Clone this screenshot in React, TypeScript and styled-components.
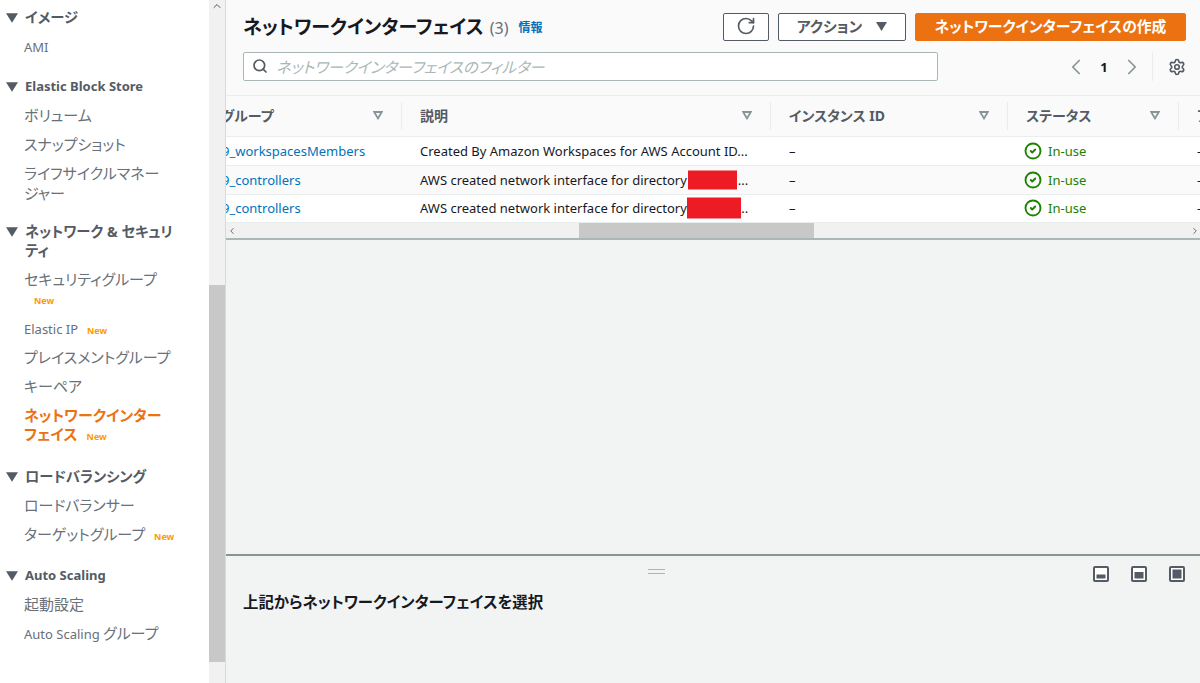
import styled, { createGlobalStyle } from "styled-components";
import { RotateCw, ChevronLeft, ChevronRight, ChevronUp, Settings, Search, CircleCheck } from "lucide-react";

const GlobalStyle = createGlobalStyle`
  html, body {
    margin: 0;
    padding: 0;
    height: 100%;
    overflow: hidden;
  }
  body {
    font-family: "Noto Sans", "Noto Sans CJK JP", sans-serif;
    font-feature-settings: "palt";
    font-size: 14px;
    color: #16191f;
  }
  * {
    box-sizing: border-box;
  }
`;

const Page = styled.div`
  display: flex;
  width: 1200px;
  height: 683px;
  overflow: hidden;
`;

const Sidebar = styled.nav`
  width: 209px;
  flex: none;
  background: #fff;
  padding-top: 8px;
`;

const Section = styled.div<{ $after: number }>`
  margin-bottom: ${(p) => p.$after}px;
`;

const Latin = styled.span`
  font-size: 13px;
  line-height: 1;
`;

const SectionTitle = styled.div`
  display: flex;
  align-items: flex-start;
  gap: 7px;
  padding: 0 30px 0 6px;
  font-size: 14.3px;
  font-weight: 700;
  line-height: 19.5px;
  color: #545b64;
  margin-bottom: 9.5px;

  ${Latin} {
    line-height: 19.5px;
  }
`;

const TitleCaret = styled.span`
  flex: none;
  display: flex;
  margin-top: 5px;
`;

const NavItem = styled.div<{ $active?: boolean }>`
  padding: 0 20px 0 24px;
  font-size: 15px;
  line-height: 19.5px;
  margin-bottom: 9.5px;
  color: ${(p) => (p.$active ? "#ec7211" : "#687078")};
  font-weight: ${(p) => (p.$active ? 700 : 400)};
`;

const NewTag = styled.span<{ $block?: boolean }>`
  display: ${(p) => (p.$block ? "block" : "inline")};
  margin: ${(p) => (p.$block ? "1px 0 -1px 10px" : "0 0 0 9px")};
  font-size: 9px;
  font-weight: 700;
  line-height: ${(p) => (p.$block ? "19.5px" : "1")};
  color: #ff9900;
`;

const SideTrack = styled.div`
  position: relative;
  width: 16px;
  flex: none;
  background: #f1f1f1;
  padding-top: 285px;
`;

const SideThumb = styled.div`
  height: 377px;
  background: #c8c8c8;
`;

const TrackArrow = styled.span`
  position: absolute;
  top: 0;
  left: 2px;
  color: #555;
  line-height: 0;
`;

const Main = styled.main`
  flex: 1;
  min-width: 0;
  display: flex;
  flex-direction: column;
  background: #f2f3f3;
  border-left: 1px solid #d5dbdb;
`;

const Header = styled.header`
  height: 95px;
  padding: 13px 14px 0 17px;
  background: #fafafa;
`;

const TitleRow = styled.div`
  display: flex;
  align-items: center;
  height: 28px;
`;

const Title = styled.h1`
  margin: 0;
  font-size: 19px;
  font-weight: 700;
  line-height: 28px;
  color: #16191f;
`;

const Count = styled.span`
  margin-left: 6px;
  font-size: 16px;
  font-weight: 400;
  color: #687078;
`;

const InfoLink = styled.a`
  margin-left: 10px;
  font-size: 12px;
  font-weight: 700;
  color: #0073bb;
`;

const Actions = styled.div`
  margin-left: auto;
  display: flex;
  gap: 9px;
`;

const Button = styled.button<{ $primary?: boolean; $width: number }>`
  display: flex;
  align-items: center;
  justify-content: center;
  gap: 14px;
  width: ${(p) => p.$width}px;
  height: 28px;
  padding: 0 0 2px;
  border: 1px solid ${(p) => (p.$primary ? "#ec7211" : "#545b64")};
  border-radius: 2px;
  background: ${(p) => (p.$primary ? "#ec7211" : "#fff")};
  color: ${(p) => (p.$primary ? "#fff" : "#545b64")};
  font: inherit;
  font-feature-settings: inherit;
  font-size: 14.8px;
  font-weight: 700;
`;

const ButtonLabel = styled.span`
  margin-bottom: 2px;
`;

const FilterRow = styled.div`
  display: flex;
  align-items: center;
  margin-top: 11px;
  height: 29px;
`;

const SearchBox = styled.div`
  display: flex;
  align-items: center;
  gap: 8px;
  width: 695px;
  height: 29px;
  padding: 0 8px 1px;
  background: #fff;
  border: 1px solid #aab7b8;
  border-radius: 2px;
  color: #545b64;
`;

const Placeholder = styled.span`
  font-size: 15.25px;
  font-style: italic;
  color: #aab7b8;
`;

const Pager = styled.div`
  margin-left: auto;
  display: flex;
  align-items: center;
  height: 29px;
`;

const PageNumber = styled.span`
  width: 30px;
  text-align: center;
  font-size: 13px;
  font-weight: 700;
`;

const PagerGear = styled.div`
  display: flex;
  align-items: center;
  height: 100%;
  margin-left: 7px;
  padding-left: 15px;
  border-left: 1px solid #eaeded;
  color: #545b64;
`;

const TableClip = styled.div`
  overflow: hidden;
  flex: none;
`;

const Columns = "181px 369px 237px 171px 100px";

const HeadRow = styled.div`
  display: grid;
  grid-template-columns: ${Columns};
  width: 1058px;
  margin-left: -5px;
  height: 42px;
  padding: 6px 0;
  background: #fafafa;
  border-top: 1px solid #eaeded;
  border-bottom: 1px solid #eaeded;
`;

const HeadCell = styled.div<{ $first?: boolean }>`
  display: flex;
  align-items: center;
  justify-content: space-between;
  padding: 0 18px 2px ${(p) => (p.$first ? "0" : "18px")};
  border-right: 1px solid #eaeded;
  font-weight: 700;
  color: #545b64;
  white-space: nowrap;
`;

const Row = styled.div<{ $alt?: boolean }>`
  display: grid;
  grid-template-columns: ${Columns};
  width: 1058px;
  margin-left: -5px;
  height: 28.8px;
  align-items: center;
  background: ${(p) => (p.$alt ? "#fafafa" : "#fff")};
  border-bottom: 1px solid #eaeded;
  white-space: nowrap;
`;

const Cell = styled.div<{ $first?: boolean }>`
  position: relative;
  padding-left: ${(p) => (p.$first ? "1px" : "18px")};
  font-size: 13px;
  line-height: 18px;
  color: #16191f;
`;

const GroupLink = styled.a`
  color: #0073bb;
`;

const Dots = styled.span`
  margin-left: 51px;
`;

const Redaction = styled.span<{ $left: number; $width: number; $height: number }>`
  position: absolute;
  left: ${(p) => p.$left}px;
  top: 50%;
  width: ${(p) => p.$width}px;
  height: ${(p) => p.$height}px;
  transform: translateY(-50%);
  background: #ed1c24;
`;

const Status = styled.div`
  display: flex;
  align-items: center;
  gap: 6px;
  padding-left: 16px;
  font-size: 13px;
  color: #1d8102;
`;

const HScroll = styled.div`
  position: relative;
  flex: none;
  height: 17px;
  background: #f1f1f1;
  border-bottom: 2px solid #aab7b8;
`;

const HThumb = styled.div`
  width: 235px;
  height: 15px;
  margin-left: 353px;
  background: #c8c8c8;
`;

const HArrow = styled.span<{ $right?: boolean }>`
  position: absolute;
  top: 3px;
  ${(p) => (p.$right ? "right: 0;" : "left: 1px;")}
  line-height: 0;
  color: #555;
`;

const Empty = styled.div`
  flex: 1;
`;

const SplitPanel = styled.section`
  position: relative;
  height: 129px;
  flex: none;
  padding: 37px 17px 0;
  border-top: 2px solid #879596;
`;

const Handle = styled.div`
  position: absolute;
  top: 13px;
  left: 422px;
  width: 17px;
  height: 5px;
  border-top: 1px solid #aab7b8;
  border-bottom: 1px solid #aab7b8;
`;

const SplitIcons = styled.div`
  position: absolute;
  top: 10px;
  right: 15px;
  display: flex;
  gap: 22px;
`;

const SplitTitle = styled.h2`
  margin: 0;
  font-size: 15.4px;
  line-height: 20px;
  font-weight: 700;
  color: #16191f;
`;

function Caret({ size = 10 }: { size?: number }) {
  return (
    <svg width={size} height={size - 2} viewBox="0 0 10 8" fill="#545b64">
      <path d="M0 0h10L5 8z" />
    </svg>
  );
}

function SortCaret() {
  return (
    <svg width="10" height="9" viewBox="0 0 10 9" fill="none" stroke="#879596" strokeWidth="1.8">
      <path d="M1.2 1h7.6L5 7.4z" />
    </svg>
  );
}

// fill: 0 = low dock, 1 = middle dock, 2 = full
function SplitIcon({ fill }: { fill: number }) {
  const top = [8.5, 6, 3.5][fill];
  return (
    <svg width="16" height="16" viewBox="0 0 16 16">
      <rect x="1" y="1" width="14" height="14" rx="1" fill="#fff" stroke="#545b64" strokeWidth="2" />
      <rect x="3.5" y={top} width="9" height={12.5 - top} fill="#545b64" />
    </svg>
  );
}

const rows = [
  { group: "9_workspacesMembers", text: "Created By Amazon Workspaces for AWS Account ID..." },
  { group: "9_controllers", text: "AWS created network interface for directory", red: { left: 286, width: 49, height: 19 } },
  { group: "9_controllers", text: "AWS created network interface for directory", red: { left: 285, width: 54, height: 21 } },
];

function App() {
  return (
    <Page>
      <GlobalStyle />
      <Sidebar>
        <Section $after={20.5}>
          <SectionTitle><TitleCaret><Caret size={12} /></TitleCaret>イメージ</SectionTitle>
          <NavItem><Latin>AMI</Latin></NavItem>
        </Section>
        <Section $after={18.5}>
          <SectionTitle><TitleCaret><Caret size={12} /></TitleCaret><Latin>Elastic Block Store</Latin></SectionTitle>
          <NavItem>ボリューム</NavItem>
          <NavItem>スナップショット</NavItem>
          <NavItem>ライフサイクルマネー<br />ジャー</NavItem>
        </Section>
        <Section $after={22.5}>
          <SectionTitle><TitleCaret><Caret size={12} /></TitleCaret><span>ネットワーク & セキュリ<br />ティ</span></SectionTitle>
          <NavItem>セキュリティグループ<NewTag $block>New</NewTag></NavItem>
          <NavItem><Latin>Elastic IP</Latin><NewTag>New</NewTag></NavItem>
          <NavItem>プレイスメントグループ</NavItem>
          <NavItem>キーペア</NavItem>
          <NavItem $active>ネットワークインター<br />フェイス<NewTag>New</NewTag></NavItem>
        </Section>
        <Section $after={21.5}>
          <SectionTitle><TitleCaret><Caret size={12} /></TitleCaret>ロードバランシング</SectionTitle>
          <NavItem>ロードバランサー</NavItem>
          <NavItem>ターゲットグループ<NewTag>New</NewTag></NavItem>
        </Section>
        <Section $after={0}>
          <SectionTitle><TitleCaret><Caret size={12} /></TitleCaret><Latin>Auto Scaling</Latin></SectionTitle>
          <NavItem>起動設定</NavItem>
          <NavItem><Latin>Auto Scaling </Latin>グループ</NavItem>
        </Section>
      </Sidebar>
      <SideTrack>
        <TrackArrow><ChevronUp size={12} /></TrackArrow>
        <SideThumb />
      </SideTrack>
      <Main>
        <Header>
          <TitleRow>
            <Title>ネットワークインターフェイス<Count>(3)</Count></Title>
            <InfoLink>情報</InfoLink>
            <Actions>
              <Button $width={46}><RotateCw size={20} /></Button>
              <Button $width={128}><ButtonLabel>アクション</ButtonLabel><Caret size={11} /></Button>
              <Button $width={271} $primary><ButtonLabel>ネットワークインターフェイスの作成</ButtonLabel></Button>
            </Actions>
          </TitleRow>
          <FilterRow>
            <SearchBox>
              <Search size={16} strokeWidth={2.6} />
              <Placeholder>ネットワークインターフェイスのフィルター</Placeholder>
            </SearchBox>
            <Pager>
              <ChevronLeft size={26} color="#879596" strokeWidth={1.6} />
              <PageNumber>1</PageNumber>
              <ChevronRight size={26} color="#879596" strokeWidth={1.6} />
              <PagerGear><Settings size={18} strokeWidth={2.2} /></PagerGear>
            </Pager>
          </FilterRow>
        </Header>
        <TableClip>
          <HeadRow>
            <HeadCell $first>グループ<SortCaret /></HeadCell>
            <HeadCell>説明<SortCaret /></HeadCell>
            <HeadCell>インスタンス ID<SortCaret /></HeadCell>
            <HeadCell>ステータス<SortCaret /></HeadCell>
            <HeadCell>ア</HeadCell>
          </HeadRow>
          {rows.map((r, i) => (
            <Row key={i} $alt={i === 1}>
              <Cell $first><GroupLink>{r.group}</GroupLink></Cell>
              <Cell>
                {r.text}
                {r.red && <Dots>...</Dots>}
                {r.red && <Redaction $left={r.red.left} $width={r.red.width} $height={r.red.height} />}
              </Cell>
              <Cell>–</Cell>
              <Status><CircleCheck size={18} strokeWidth={2.5} />In-use</Status>
              <Cell>–</Cell>
            </Row>
          ))}
        </TableClip>
        <HScroll>
          <HArrow><ChevronLeft size={10} /></HArrow>
          <HThumb />
          <HArrow $right><ChevronRight size={10} /></HArrow>
        </HScroll>
        <Empty />
        <SplitPanel>
          <Handle />
          <SplitIcons>
            <SplitIcon fill={0} />
            <SplitIcon fill={1} />
            <SplitIcon fill={2} />
          </SplitIcons>
          <SplitTitle>上記からネットワークインターフェイスを選択</SplitTitle>
        </SplitPanel>
      </Main>
    </Page>
  );
}

export default App;
